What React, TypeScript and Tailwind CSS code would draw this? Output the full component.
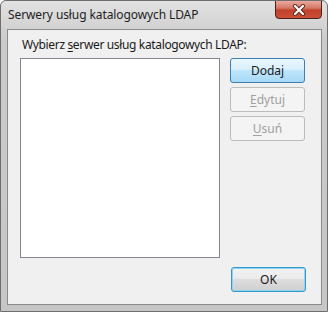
import React from "react";

const font = { fontFamily: '"Noto Sans", "Open Sans", sans-serif' };

function Btn({
  children,
  kind = "normal",
  className = "",
}: {
  children: React.ReactNode;
  kind?: "hot" | "normal" | "disabled" | "default";
  className?: string;
}) {
  const styles = {
    hot: "border-[#3c7fb1] bg-[linear-gradient(#eaf6fd_0%,#d9f0fc_45%,#bee6fd_50%,#a7d9f5_100%)] text-[#1a1a1a]",
    normal:
      "border-[#707070] bg-[linear-gradient(#f2f2f2_0%,#ebebeb_45%,#dddddd_50%,#cfcfcf_100%)] text-[#1a1a1a]",
    disabled: "border-[#bcbcbc] bg-[#f4f4f4] text-[#a0a0a0]",
    default:
      "border-[#3399cc] shadow-[inset_0_0_0_1px_#8fd3f5] bg-[linear-gradient(#f2f2f2_0%,#ebebeb_45%,#dddddd_50%,#cfcfcf_100%)] text-[#1a1a1a]",
  }[kind];
  return (
    <div
      className={`w-[75px] h-[25px] rounded-[3px] border flex items-center justify-center text-[12px] ${styles} ${className}`}
    >
      {children}
    </div>
  );
}

export default function App() {
  return (
    <div
      className="w-[328px] h-[312px] flex flex-col rounded-t-[6px] border border-[#6e6e6e] bg-[linear-gradient(#e2e2e2,#cbcbcb_40px,#c6c6c6)] overflow-hidden"
      style={font}
    >
      {/* Title bar */}
      <div className="h-[28px] flex items-start justify-between pl-[7px] pr-[5px]">
        <span className="mt-[6px] text-[12px] leading-[16px] tracking-[-0.1px] text-[#1e1e1e]">
          Serwery usług katalogowych LDAP
        </span>
        <div className="w-[47px] h-[19px] -mt-px rounded-b-[4px] border border-[#4a2018] bg-[linear-gradient(#eba99c_0%,#d77a68_40%,#c0412c_55%,#cc5038_100%)] flex items-center justify-center">
          <svg width="14" height="12" viewBox="0 0 14 12">
            <path d="M3 2 L11 10 M11 2 L3 10" stroke="#5a2a20" strokeWidth="4" strokeLinecap="round" />
            <path d="M3 2 L11 10 M11 2 L3 10" stroke="#ffffff" strokeWidth="2.2" strokeLinecap="round" />
          </svg>
        </div>
      </div>

      {/* Client area */}
      <div className="flex-1 pl-[6px] pr-[5px] pb-[6px] flex">
        <div className="flex-1 border border-[#8a8a8a] bg-[#f0f0f0] flex flex-col pl-[12px] text-[12px] text-[#1a1a1a]">
          <div className="mt-[7px] ml-[2px] h-[16px] leading-[16px] tracking-[-0.35px]">
            Wybierz <span className="underline underline-offset-2">s</span>erwer usług katalogowych LDAP:
          </div>
          <div className="mt-[5px] flex">
            <div className="w-[200px] h-[200px] bg-white border border-[#828790]" />
            <div className="ml-[10px] flex flex-col gap-[4px]">
              <Btn kind="hot">
                <span>
                  Doda<span className="underline underline-offset-2">j</span>
                </span>
              </Btn>
              <Btn kind="disabled">
                <span>
                  <span className="underline underline-offset-2">E</span>dytuj
                </span>
              </Btn>
              <Btn kind="disabled">
                <span>
                  <span className="underline underline-offset-2">U</span>suń
                </span>
              </Btn>
            </div>
          </div>
          <div className="mt-[9px] flex justify-end pr-[15px]">
            <Btn kind="default" className="h-[24px]">
              OK
            </Btn>
          </div>
        </div>
      </div>
    </div>
  );
}
